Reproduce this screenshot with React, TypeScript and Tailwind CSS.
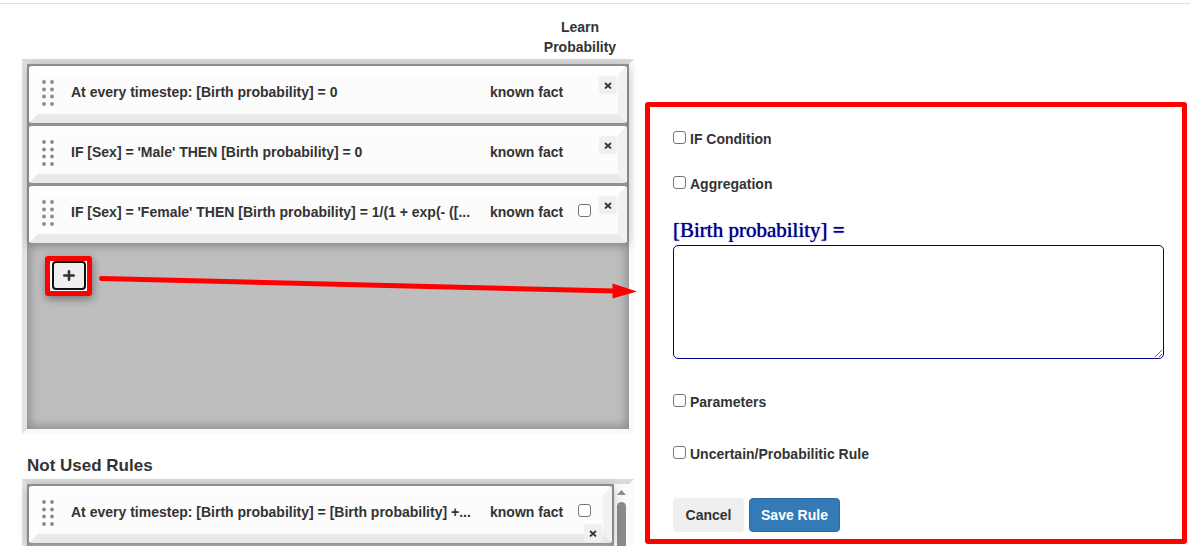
import { useId } from "react";

type Rule = { text: string; learnable?: boolean; compact?: boolean };

const usedRules: Rule[] = [
  { text: "At every timestep: [Birth probability] = 0" },
  { text: "IF [Sex] = 'Male' THEN [Birth probability] = 0" },
  { text: "IF [Sex] = 'Female' THEN [Birth probability] = 1/(1 + exp(- ([...", learnable: true },
];

const unusedRules: Rule[] = [
  { text: "At every timestep: [Birth probability] = [Birth probability] +...", learnable: true, compact: true },
];

const checkboxClass =
  "size-[13px] shrink-0 appearance-none rounded-[3px] border border-[#767676] bg-white checked:bg-[#337ab7]";

function Grip() {
  return (
    <svg width="16" height="30" viewBox="0 0 16 30" fill="#8b8b8b" aria-hidden="true" className="shrink-0">
      {[4, 11.5, 18.5, 26].map((y) => (
        <g key={y}>
          <circle cx="4" cy={y} r="1.9" />
          <circle cx="12" cy={y} r="1.9" />
        </g>
      ))}
    </svg>
  );
}

function CloseButton() {
  return (
    <button
      type="button"
      aria-label="Remove rule"
      className="flex size-[18px] shrink-0 items-center justify-center rounded-[3px] bg-[#f0f0f0]"
    >
      <svg width="8" height="8" viewBox="0 0 8 8" stroke="#333" strokeWidth="1.7" aria-hidden="true">
        <path d="M1 2 L7 7.500 M7 2 L1 7.500" />
      </svg>
    </button>
  );
}

function RuleCard({ rule }: { rule: Rule }) {
  return (
    <li className="flex h-[57px] rounded-[3px] border-[9px] border-t-[#fefefe] border-r-[#f1f1f1] border-b-[#e9e9e9] border-l-[#fdfdfd] bg-[#fcfcfc] pl-[2px]">
      <div className="flex h-9 min-w-0 grow items-center">
        <Grip />
        <div className="flex pb-[2px] pl-[15px] whitespace-nowrap">
          <span className="w-[419px] shrink-0">{rule.text}</span>
          <span>known fact</span>
        </div>
      </div>
      {rule.compact ? (
        <div className="flex flex-col items-end gap-[7px] pt-[9px] pr-px">
          <input type="checkbox" aria-label="Learn probability" className={`${checkboxClass} mr-[11px]`} />
          <CloseButton />
        </div>
      ) : (
        <div className="flex gap-2 pt-px pr-px">
          {rule.learnable && (
            <input type="checkbox" aria-label="Learn probability" className={`${checkboxClass} mt-2`} />
          )}
          <CloseButton />
        </div>
      )}
    </li>
  );
}

function Option({ label }: { label: string }) {
  const id = useId();
  return (
    <div className="flex h-5 items-center gap-1">
      <input id={id} type="checkbox" className={`${checkboxClass} mb-[3px]`} />
      <label htmlFor={id}>{label}</label>
    </div>
  );
}

const wellClass =
  "relative border-[5px] border-t-[#d9d9d9] border-r-[#fafafa] border-b-[#fafafa] border-l-[#e3e3e3] bg-[#bebebe]";

const listClass = "relative flex flex-col gap-[3px] bg-[#919191] shadow-[0_2px_10px_rgba(0,0,0,0.35)]";

export default function App() {
  return (
    <div className="h-screen overflow-hidden bg-white pt-[3px] font-['Liberation_Sans',Arial,sans-serif] text-sm leading-5 font-bold text-[#333]">
      <main className="grid grid-cols-[minmax(0,612fr)_minmax(0,542fr)] items-start gap-[11px] border-t border-[#e0e0e0] pr-[3px] pl-[22px]">
        <section className="pt-[13px]">
          <div className="flex justify-end pr-2">
            <p className="w-[92px] text-center">
              Learn
              <br />
              Probability
            </p>
          </div>

          <div className={`${wellClass} mt-[2px] h-[375px] p-[2px]`}>
            <div className="pointer-events-none absolute inset-0 shadow-[inset_0_0_10px_3px_rgba(0,0,0,0.25)]" />
            <ul className={listClass}>
              {usedRules.map((rule) => (
                <RuleCard key={rule.text} rule={rule} />
              ))}
            </ul>
            <div className="relative mt-[13px] ml-4 flex h-10 w-[47px] justify-center rounded-[3px] border-[5px] border-[#f00] bg-white shadow-[1px_3px_8px_rgba(0,0,0,0.4)]">
              <button
                type="button"
                aria-label="Add rule"
                className="flex h-[29px] w-[34px] items-center justify-center rounded-[4px] border-2 border-[#101010] bg-[#efefef]"
              >
                <svg width="12" height="12" viewBox="0 0 12 12" stroke="#333" strokeWidth="2.6" strokeLinecap="round" aria-hidden="true">
                  <path d="M6 1.300 V9.700 M1.300 5.500 H10.700" />
                </svg>
              </button>
            </div>
            <svg
              className="pointer-events-none absolute top-[205px] left-[70px] z-10"
              width="542"
              height="34"
              viewBox="0 0 542 34"
              aria-hidden="true"
            >
              <path d="M4.500 9.500 L518 22" stroke="#f00" strokeWidth="5" strokeLinecap="round" />
              <path d="M515.500 14.500 L540 22.500 L515.500 29.500 Z" fill="#f00" />
            </svg>
          </div>

          <h2 className="mt-[22px] ml-[5px] text-[17px] leading-5">Not Used Rules</h2>

          <div className={`${wellClass} mt-[3px] flex h-[240px]`}>
            <div className="min-w-0 grow p-[2px] shadow-[inset_0_0_10px_3px_rgba(0,0,0,0.25)]">
              <ul className={listClass}>
                {unusedRules.map((rule) => (
                  <RuleCard key={rule.text} rule={rule} />
                ))}
              </ul>
            </div>
            <div className="flex w-[15px] shrink-0 flex-col items-center bg-[#fafafa] pt-[6px]">
              <svg width="9" height="5" viewBox="0 0 9 5" fill="#8b8b8b" aria-hidden="true">
                <path d="M4.500 0 L9 5 H0 Z" />
              </svg>
              <div className="mt-[7px] h-[120px] w-[9px] rounded-full bg-[#8b8b8b]" />
            </div>
          </div>
        </section>

        <form className="mt-[98px] rounded-[3px] border-[5px] border-[#f00] pt-[22px] pr-[18px] pb-[7px] pl-[23px]">
          <div className="flex flex-col gap-[25px]">
            <Option label="IF Condition" />
            <Option label="Aggregation" />
          </div>
          <label
            htmlFor="formula"
            className="mt-6 block font-['Liberation_Serif','Times_New_Roman',serif] text-[21px] leading-6 font-normal text-[#00008b] [text-shadow:0_0_1px_currentColor]"
          >
            [Birth probability] <span className="font-bold">=</span>
          </label>
          <textarea
            id="formula"
            className="mt-[3px] block h-[114px] w-full resize rounded-[5px] border border-[#00008b] bg-white p-2 text-[#00008b]"
          />
          <div className="mt-[33px] flex flex-col gap-8">
            <Option label="Parameters" />
            <Option label="Uncertain/Probabilitic Rule" />
          </div>
          <div className="mt-[34px] flex gap-[5px]">
            <button type="button" className="h-[34px] w-[71px] rounded-[4px] bg-[#efefef]">
              Cancel
            </button>
            <button
              type="submit"
              className="h-[34px] w-[91px] rounded-[4px] border border-[#2e6da4] bg-[#337ab7] text-white"
            >
              Save Rule
            </button>
          </div>
        </form>
      </main>
    </div>
  );
}
